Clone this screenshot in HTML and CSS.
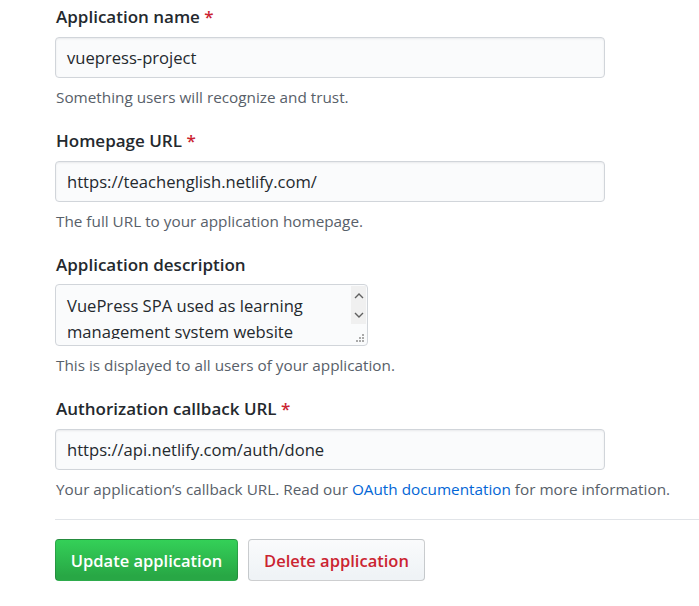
FILE: index.html
```html
<!DOCTYPE html>
<html>
<head>
<meta charset="utf-8">
<link rel="stylesheet" href="styles.css">
</head>
<body>
<form class="app-form">
  <div class="form-group">
    <label class="label">Application name <span class="req">*</span></label>
    <div class="input">vuepress-project</div>
    <p class="note">Something users will recognize and trust.</p>
  </div>
  <div class="form-group">
    <label class="label">Homepage URL <span class="req">*</span></label>
    <div class="input">https://teachenglish.netlify.com/</div>
    <p class="note">The full URL to your application homepage.</p>
  </div>
  <div class="form-group">
    <label class="label">Application description</label>
    <div class="textarea">
      <div class="textarea-text">VuePress SPA used as learning management system website</div>
      <div class="scrollbar">
        <svg class="arrow" width="10" height="6" viewBox="0 0 10 6"><path d="M1 5 L5 1 L9 5" fill="none" stroke="#606060" stroke-width="1.4"/></svg>
        <svg class="arrow" width="10" height="6" viewBox="0 0 10 6"><path d="M1 1 L5 5 L9 1" fill="none" stroke="#606060" stroke-width="1.4"/></svg>
      </div>
      <svg class="grip" width="9" height="9" viewBox="0 0 9 9">
        <rect x="6" y="0" width="2" height="2" fill="#aaa"/>
        <rect x="3" y="3" width="2" height="2" fill="#aaa"/>
        <rect x="6" y="3" width="2" height="2" fill="#aaa"/>
        <rect x="0" y="6" width="2" height="2" fill="#aaa"/>
        <rect x="3" y="6" width="2" height="2" fill="#aaa"/>
        <rect x="6" y="6" width="2" height="2" fill="#aaa"/>
      </svg>
    </div>
    <p class="note">This is displayed to all users of your application.</p>
  </div>
  <div class="form-group form-group-last">
    <label class="label">Authorization callback URL <span class="req">*</span></label>
    <div class="input">https://api.netlify.com/auth/done</div>
    <p class="note">Your application’s callback URL. Read our <a class="link" href="#">OAuth documentation</a> for more information.</p>
  </div>
  <div class="actions">
    <button type="button" class="btn btn-primary">Update application</button>
    <button type="button" class="btn btn-danger">Delete application</button>
  </div>
</form>
</body>
</html>
```
FILE: styles.css
```css
html, body {
  margin: 0;
  padding: 0;
  background: #fff;
}
body {
  font-family: "Open Sans", "Noto Sans", sans-serif;
  color: #24292e;
}
.app-form {
  padding: 4px 0 0 55px;
}
.form-group {
  display: flex;
  flex-direction: column;
  align-items: flex-start;
  margin-bottom: 20px;
}
.form-group-last {
  margin-bottom: 19px;
}
.label {
  font-size: 17px;
  font-weight: 600;
  line-height: 26px;
  margin-bottom: 7px;
  padding-left: 1px;
}
.req {
  color: #cb2431;
}
.input {
  box-sizing: border-box;
  width: 550px;
  height: 41px;
  padding: 0 11px;
  display: flex;
  align-items: center;
  font-size: 16.6px;
  background: #fafbfc;
  border: 1px solid #d1d5da;
  border-radius: 4px;
  box-shadow: inset 0 1px 2px rgba(27,31,35,.075);
}
.note {
  margin: 8px 0 0 1px;
  font-size: 15.3px;
  line-height: 22px;
  color: #586069;
}
.link {
  color: #0366d6;
  text-decoration: none;
}
.textarea {
  position: relative;
  box-sizing: border-box;
  width: 313px;
  height: 62px;
  margin-top: -1px;
  background: #fafbfc;
  border: 1px solid #d1d5da;
  border-radius: 4px;
  display: flex;
  align-items: flex-start;
  overflow: hidden;
}
.textarea-text {
  box-sizing: border-box;
  flex: 1;
  height: 54px;
  padding: 8px 0 0 11px;
  font-size: 16.6px;
  line-height: 26px;
  overflow: hidden;
}
.scrollbar {
  box-sizing: border-box;
  width: 15px;
  height: 38px;
  margin: 1px 1px 0 0;
  background: #f0f0f0;
  display: flex;
  flex-direction: column;
  align-items: center;
  justify-content: space-between;
  padding: 7px 0 6px;
}
.grip {
  position: absolute;
  right: 2px;
  bottom: 2px;
}
.actions {
  border-top: 1px solid #e1e4e8;
  padding-top: 19px;
  display: flex;
  gap: 10px;
}
.btn {
  box-sizing: border-box;
  height: 42px;
  padding: 0;
  white-space: nowrap;
  font-family: inherit;
  font-size: 16.5px;
  font-weight: 600;
  border: 1px solid rgba(27,31,35,.2);
  border-radius: 4px;
  cursor: pointer;
}
.btn-primary {
  color: #fff;
  background-image: linear-gradient(-180deg, #34d058 0%, #28a745 90%);
  width: 183px;
}
.btn-danger {
  color: #cb2431;
  background-image: linear-gradient(-180deg, #fafbfc 0%, #eff3f6 90%);
  width: 177px;
}
```
